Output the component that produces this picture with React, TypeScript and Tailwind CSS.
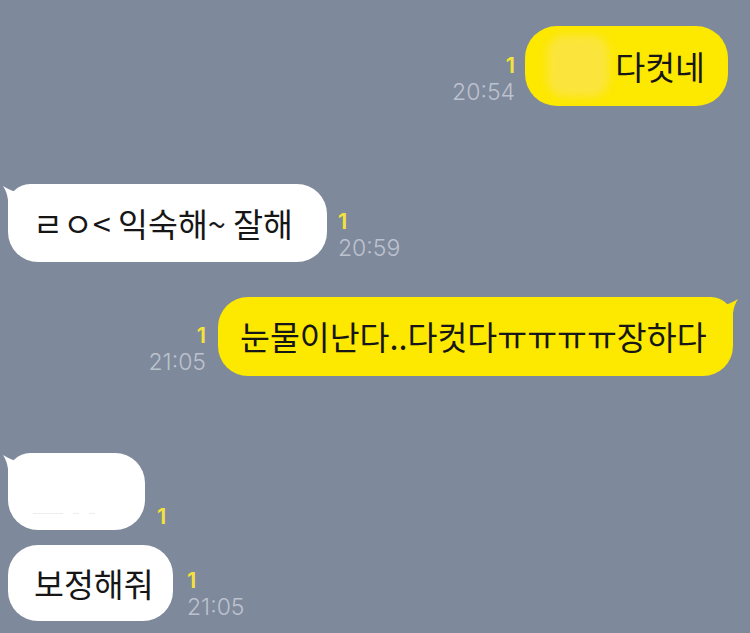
import React from 'react';

const KR = { fontFamily: '"Noto Sans CJK KR", "Noto Sans", sans-serif' };
const NUM = { fontFamily: 'Inter, "Noto Sans", sans-serif' };

const Tail = ({ side, color }: { side: 'left' | 'right'; color: string }) => (
  <svg
    width="30"
    height="24"
    viewBox="0 0 30 24"
    className={
      side === 'left'
        ? 'absolute left-[-6px] top-0'
        : 'absolute right-[-6px] top-0 scale-x-[-1]'
    }
  >
    <path d="M1 2 Q9 7 15 8 Q22 8 28 0 L30 0 L30 24 L6 24 L6 16 Q5 8 1 2 Z" fill={color} />
  </svg>
);

const Meta = ({ time, align }: { time?: string; align: 'left' | 'right' }) => (
  <div className={`flex flex-col ${align === 'right' ? 'items-end' : 'items-start'} leading-[27px]`}>
    <span className="text-[22px] font-semibold text-[#f5e33a]" style={NUM}>1</span>
    {time && <span className="text-[23px] font-light text-[#bcc2ce]" style={NUM}>{time}</span>}
  </div>
);

const Bubble = ({
  children,
  mine,
  tail,
  className = '',
}: {
  children?: React.ReactNode;
  mine: boolean;
  tail?: boolean;
  className?: string;
}) => (
  <div
    className={`relative flex items-center px-[25px] rounded-[30px] text-[32.5px] text-[#161616] ${
      mine ? 'bg-[#fde800]' : 'bg-white'
    } ${tail ? (mine ? 'rounded-tr-[22px]' : 'rounded-tl-[22px]') : ''} ${className}`}
    style={KR}
  >
    {tail && <Tail side={mine ? 'right' : 'left'} color={mine ? '#fde800' : '#ffffff'} />}
    <span className="relative whitespace-nowrap">{children}</span>
  </div>
);

export default function App() {
  return (
    <div className="w-[750px] h-[633px] overflow-hidden bg-[#7f899c] flex flex-col">
      {/* 20:54 */}
      <div className="flex justify-end items-end gap-[10px] pr-[22px] mt-[26px]">
        <Meta time="20:54" align="right" />
        <div className="relative h-[80px] w-[203px] flex items-center rounded-[32px] bg-[#fde800] pl-[22px] pr-[23px]" style={KR}>
          <span className="w-[62px] h-[62px] rounded-[18px] bg-[#fbe53c] blur-[4px]" />
          <span className="ml-auto text-[32.5px] text-[#161616] whitespace-nowrap">다컷네</span>
        </div>
      </div>

      {/* 20:59 */}
      <div className="flex items-end gap-[11px] pl-[8px] mt-[78px]">
        <Bubble mine={false} tail className="w-[319px] h-[78px]">ㄹㅇ&lt; 익숙해~ 잘해</Bubble>
        <Meta time="20:59" align="left" />
      </div>

      {/* 21:05 */}
      <div className="flex justify-end items-end gap-[12px] pr-[17px] mt-[35px]">
        <Meta time="21:05" align="right" />
        <Bubble mine tail className="w-[515px] h-[79px] pl-[22px]">눈물이난다..다컷다ㅠㅠㅠㅠ장하다</Bubble>
      </div>

      {/* blank + 보정해줘 */}
      <div className="flex items-end gap-[12px] pl-[8px] mt-[77px]">
        <Bubble mine={false} tail className="w-[137px] h-[77px]">
          <span className="flex gap-[10px] mt-[44px] opacity-40">
            <span className="w-[30px] h-[1px] bg-[#cfd3da]" />
            <span className="w-[6px] h-[1px] bg-[#cfd3da]" />
            <span className="w-[6px] h-[1px] bg-[#cfd3da]" />
          </span>
        </Bubble>
        <Meta align="left" />
      </div>

      <div className="flex items-end gap-[14px] pl-[8px] mt-[15px]">
        <Bubble mine={false} className="w-[165px] h-[76px] pl-[26px]">보정해줘</Bubble>
        <Meta time="21:05" align="left" />
      </div>
    </div>
  );
}
